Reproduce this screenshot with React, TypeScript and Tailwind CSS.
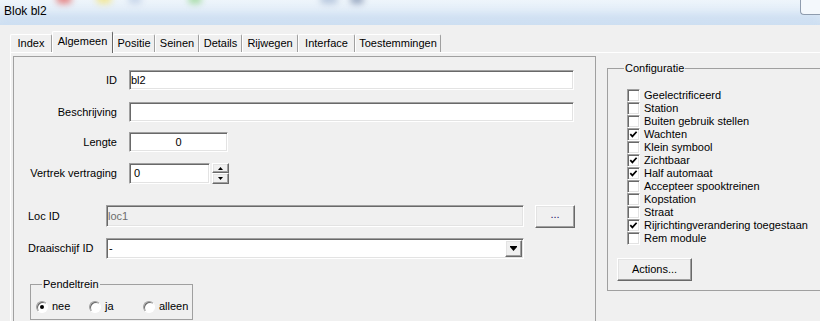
import React from "react";

// classic 3D borders
const sunken =
  "border border-t-[#a0a0a0] border-l-[#a0a0a0] border-b-white border-r-white shadow-[inset_1px_1px_0_#696969,inset_-1px_-1px_0_#e3e3e3]";
const raised =
  "border border-t-white border-l-white border-b-[#696969] border-r-[#696969] shadow-[inset_-1px_-1px_0_#a0a0a0,inset_1px_1px_0_#e3e3e3]";

const tabs = [
  { label: "Index", w: "w-[42px]" },
  { label: "Algemeen", w: "w-[61px]", active: true },
  { label: "Positie", w: "w-[42px]" },
  { label: "Seinen", w: "w-[44px]" },
  { label: "Details", w: "w-[43px]" },
  { label: "Rijwegen", w: "w-[56px]" },
  { label: "Interface", w: "w-[57px]" },
  { label: "Toestemmingen", w: "w-[86px]" },
];

const options = [
  { label: "Geelectrificeerd" },
  { label: "Station" },
  { label: "Buiten gebruik stellen" },
  { label: "Wachten", checked: true },
  { label: "Klein symbool" },
  { label: "Zichtbaar", checked: true },
  { label: "Half automaat", checked: true },
  { label: "Accepteer spooktreinen" },
  { label: "Kopstation" },
  { label: "Straat" },
  { label: "Rijrichtingverandering toegestaan", checked: true },
  { label: "Rem module" },
];

const TitleBar = () => (
  <div className="relative h-[25px] shrink-0 overflow-hidden bg-gradient-to-b from-[#eef5fb] via-[#e2edf8] to-[#cfe0f2]">
    {/* blurred desktop icons behind the glass */}
    <div className="absolute left-[56px] top-[-6px] h-[10px] w-[16px] rounded-full bg-[#e58a8a] blur-[3px]" />
    <div className="absolute left-[96px] top-[-6px] h-[10px] w-[16px] rounded-full bg-[#f1e79a] blur-[3px]" />
    <div className="absolute left-[128px] top-[-5px] h-[9px] w-[14px] rounded-full bg-[#c8d6ea] blur-[3px]" />
    <div className="absolute left-[188px] top-[-5px] h-[9px] w-[14px] rounded-full bg-[#a9dca9] blur-[3px]" />
    <div className="absolute left-[320px] top-[-5px] h-[9px] w-[18px] rounded-full bg-[#b8c8de] blur-[3px]" />
    <div className="absolute left-[350px] top-[-5px] h-[9px] w-[14px] rounded-full bg-[#9aa9c2] blur-[3px]" />
    <div className="absolute left-[0px] top-[14px] h-[8px] w-[820px] bg-[#c4d8ef] opacity-60 blur-[4px]" />
    <div className="relative pl-[4px] pt-[4px] text-[12px] leading-[14px] text-black">Blok bl2</div>
    <div className="absolute right-0 top-0 h-[15px] w-[20px] rounded-bl-[4px] border-b border-l border-[#8f9cae] bg-[#f4f8fc]" />
  </div>
);

const Tab = ({ label, w, active }: { label: string; w: string; active?: boolean }) =>
  active ? (
    <div
      className={`${w} relative z-10 -mb-[1px] flex h-[22px] justify-center rounded-t-[2px] border-l border-r border-t border-l-white border-r-[#696969] border-t-white bg-[#f0f0f0] pt-[3px]`}
    >
      {label}
    </div>
  ) : (
    <div
      className={`${w} flex h-[18px] justify-center rounded-t-[2px] border-l border-r border-t border-l-white border-r-[#a0a0a0] border-t-white bg-[#f0f0f0] pt-[2px]`}
    >
      {label}
    </div>
  );

const Checkbox = ({ label, checked }: { label: string; checked?: boolean }) => (
  <div className="flex h-[13px] items-center">
    <span className={`flex h-[13px] w-[13px] shrink-0 items-center justify-center bg-white ${sunken}`}>
      {checked && (
        <svg width="9" height="9" viewBox="0 0 9 9">
          <path d="M1.3 4.2 L3.4 6.4 L7.6 1.8" fill="none" stroke="#000" strokeWidth="1.7" />
        </svg>
      )}
    </span>
    <span className="ml-[4px] whitespace-nowrap">{label}</span>
  </div>
);

const Radio = ({ label, checked, w }: { label: string; checked?: boolean; w: string }) => (
  <div className={`${w} flex h-[13px] items-center`}>
    <span className="flex h-[12px] w-[12px] items-center justify-center rounded-full border border-b-white border-l-[#a0a0a0] border-r-white border-t-[#a0a0a0] bg-white shadow-[inset_1px_1px_0_#696969]">
      {checked && <span className="h-[4px] w-[4px] rounded-full bg-black" />}
    </span>
    <span className="ml-[4px]">{label}</span>
  </div>
);

const Label = ({ children }: { children: React.ReactNode }) => (
  <span className="w-[103px] text-right">{children}</span>
);

const LeftPanel = () => (
  <div className="flex w-[582px] shrink-0 flex-col border-l border-t border-[#a0a0a0]">
    <div className="mt-[13px] flex h-[20px] items-center">
      <Label>ID</Label>
      <div className={`ml-[12px] flex h-[20px] w-[445px] items-center bg-white pl-[1px] ${sunken}`}>bl2</div>
    </div>
    <div className="mt-[12px] flex h-[20px] items-center">
      <Label>Beschrijving</Label>
      <div className={`ml-[12px] h-[20px] w-[445px] bg-white ${sunken}`} />
    </div>
    <div className="mt-[10px] flex h-[20px] items-center">
      <Label>Lengte</Label>
      <div className={`ml-[12px] flex h-[20px] w-[99px] items-center justify-center bg-white ${sunken}`}>0</div>
    </div>
    <div className="mt-[11px] flex h-[21px] items-center">
      <Label>Vertrek vertraging</Label>
      <div className={`ml-[12px] flex h-[21px] w-[81px] items-center bg-white pl-[4px] ${sunken}`}>0</div>
      <div className="ml-[2px] flex h-[21px] w-[17px] flex-col">
        <div className={`flex h-[10px] items-center justify-center ${raised}`}>
          <svg width="5" height="3" viewBox="0 0 5 3">
            <path d="M2.5 0 L5 3 L0 3 Z" fill="#000" />
          </svg>
        </div>
        <div className={`flex h-[11px] items-center justify-center ${raised}`}>
          <svg width="5" height="3" viewBox="0 0 5 3">
            <path d="M0 0 L5 0 L2.5 3 Z" fill="#000" />
          </svg>
        </div>
      </div>
    </div>

    <div className="mt-[21px] flex h-[22px] items-center">
      <span className="w-[92px] pl-[14px]">Loc ID</span>
      <div className={`flex h-[22px] w-[418px] items-center bg-[#f0f0f0] pl-[1px] text-[#6d6d6d] ${sunken}`}>loc1</div>
      <button className={`ml-[11px] flex h-[23px] w-[40px] items-center justify-center bg-[#f0f0f0] pb-[3px] text-[#1b1464] ${raised}`}>
        ...
      </button>
    </div>
    <div className="mt-[11px] flex h-[21px] items-center">
      <span className="w-[92px] pl-[14px]">Draaischijf ID</span>
      <div className={`flex h-[21px] w-[418px] items-center justify-between bg-white pl-[2px] pr-[1px] ${sunken}`}>
        <span>-</span>
        <div className={`flex h-[17px] w-[17px] flex-col items-center justify-center bg-[#f0f0f0] ${raised}`}>
          <svg width="7" height="5" viewBox="0 0 7 5">
            <path d="M0 0 L7 0 L7 1 L0 1 Z M0 1 L7 1 L3.5 5 Z" fill="#000" />
          </svg>
        </div>
      </div>
    </div>

    <fieldset className="ml-[16px] mt-[19px] w-[163px] border border-[#a0a0a0] pb-[6px] pl-[5px] pt-[9px]">
      <legend className="ml-[6px] px-[1px]">Pendeltrein</legend>
      <div className="flex">
        <Radio label="nee" checked w="w-[53px]" />
        <Radio label="ja" w="w-[54px]" />
        <Radio label="alleen" w="w-[46px]" />
      </div>
    </fieldset>
  </div>
);

const RightPanel = () => (
  <div className="flex flex-1 flex-col border-l border-[#a0a0a0] pl-[11px]">
    <fieldset className="mt-[6px] w-[240px] border border-[#a0a0a0] pb-[9px] pl-[9px] pt-[14px]">
      <legend className="ml-[7px] px-[1px]">Configuratie</legend>
      <div className="ml-[10px] flex flex-col">
        {options.map((o) => (
          <Checkbox key={o.label} label={o.label} checked={o.checked} />
        ))}
      </div>
      <button className={`mt-[13px] flex h-[23px] w-[75px] items-center justify-center bg-[#f0f0f0] ${raised}`}>
        Actions...
      </button>
    </fieldset>
  </div>
);

export default function App() {
  return (
    <div className="flex h-[321px] w-[820px] flex-col overflow-hidden bg-[#f0f0f0] font-['Liberation_Sans',Arial,sans-serif] text-[11px] leading-[13px] text-black">
      <TitleBar />
      <div className="flex flex-1 flex-col pl-[10px] pt-[7px]">
        <div className="flex h-[20px] items-end">
          {tabs.map((t) => (
            <Tab key={t.label} label={t.label} w={t.w} active={t.active} />
          ))}
        </div>
        <div className="flex flex-1 border-l border-t border-white pl-[2px] pt-[3px]">
          <LeftPanel />
          <RightPanel />
        </div>
      </div>
    </div>
  );
}
